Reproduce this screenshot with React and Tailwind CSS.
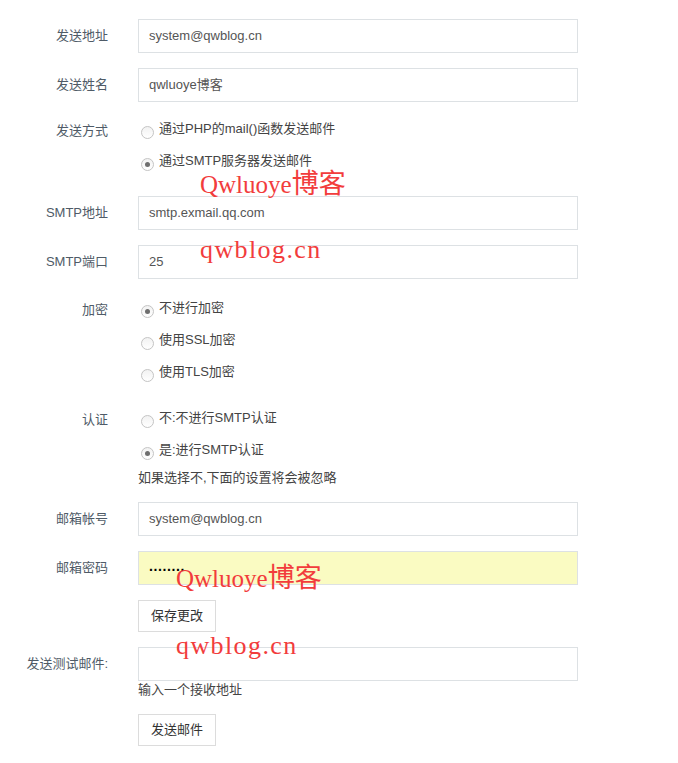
import React from "react";

const font = { fontFamily: '"Liberation Sans", "Noto Sans CJK SC", sans-serif' };

function TextInput({ value, yellow }) {
  return (
    <div
      className={`w-[440px] h-[34px] border border-[#dde1e4] pl-[10px] flex items-center text-[13px] text-[#555] ${
        yellow ? "bg-[#fafbc2]" : "bg-white"
      }`}
    >
      {value}
    </div>
  );
}

function Radio({ checked, children }) {
  return (
    <div className="h-[32px] flex items-center pl-[3px]">
      <span className="w-[13px] h-[13px] rounded-full border border-[#c4c4c4] bg-gradient-to-b from-[#f2f2f2] to-white flex items-center justify-center shrink-0 translate-y-[1px]">
        {checked && <span className="w-[5px] h-[5px] rounded-full bg-[#6e6e6e]" />}
      </span>
      <span className="ml-[5px] text-[13px] text-[#444] -translate-y-[2px]">{children}</span>
    </div>
  );
}

function Row({ label, children }) {
  return (
    <div className="flex mb-[15px]">
      <div className="w-[108px] shrink-0 text-right text-[13px] leading-[34px] text-[#4f5b67]">
        {label}
      </div>
      <div className="ml-[30px]">{children}</div>
    </div>
  );
}

function Button({ children }) {
  return (
    <div className="inline-flex h-[32px] items-center px-[12px] border border-[#dcdcdc] bg-white text-[13px] text-[#333]">
      {children}
    </div>
  );
}

function Watermark({ left, top1, top2 }) {
  const serif = { fontFamily: '"Liberation Serif", "Noto Sans CJK SC", serif' };
  return (
    <>
      <div
        className="absolute leading-none text-[#f23c3c] text-[25px] whitespace-nowrap"
        style={{ ...serif, left, top: top1 }}
      >
        Qwluoye<span className="text-[27px]">博客</span>
      </div>
      <div
        className="absolute leading-none text-[#f23c3c] text-[26px] tracking-[1.4px] whitespace-nowrap"
        style={{ ...serif, left, top: top2 }}
      >
        qwblog.cn
      </div>
    </>
  );
}

export default function App() {
  return (
    <div className="relative w-[678px] h-[763px] bg-white pt-[19px]" style={font}>
      <Row label="发送地址">
        <TextInput value="system@qwblog.cn" />
      </Row>
      <Row label="发送姓名">
        <TextInput value="qwluoye博客" />
      </Row>
      <div className="flex mb-[17px] -mt-[2px]">
        <div className="w-[108px] shrink-0 text-right text-[13px] leading-[32px] text-[#4f5b67]">发送方式</div>
        <div className="ml-[30px]">
          <Radio>通过PHP的mail()函数发送邮件</Radio>
          <Radio checked>通过SMTP服务器发送邮件</Radio>
        </div>
      </div>
      <Row label="SMTP地址">
        <TextInput value="smtp.exmail.qq.com" />
      </Row>
      <Row label="SMTP端口">
        <TextInput value="25" />
      </Row>
      <div className="flex mb-[14px]">
        <div className="w-[108px] shrink-0 text-right text-[13px] leading-[32px] text-[#4f5b67]">加密</div>
        <div className="ml-[30px]">
          <Radio checked>不进行加密</Radio>
          <Radio>使用SSL加密</Radio>
          <Radio>使用TLS加密</Radio>
        </div>
      </div>
      <div className="flex mb-[14px]">
        <div className="w-[108px] shrink-0 text-right text-[13px] leading-[32px] text-[#4f5b67]">认证</div>
        <div className="ml-[30px]">
          <Radio>不:不进行SMTP认证</Radio>
          <Radio checked>是:进行SMTP认证</Radio>
          <div className="text-[13px] leading-[20px] text-[#444]">如果选择不,下面的设置将会被忽略</div>
        </div>
      </div>
      <Row label="邮箱帐号">
        <TextInput value="system@qwblog.cn" />
      </Row>
      <Row label="邮箱密码">
        <TextInput
          yellow
          value={
            <span className="font-bold text-black text-[14px] tracking-[0.6px] -translate-y-[2px] inline-block">
              ........
            </span>
          }
        />
      </Row>
      <Row label="">
        <Button>保存更改</Button>
      </Row>
      <div className="flex mb-[15px]">
        <div className="w-[108px] shrink-0 text-right text-[13px] leading-[34px] text-[#4f5b67]">发送测试邮件:</div>
        <div className="ml-[30px]">
          <TextInput value="" />
          <div className="text-[13px] leading-[18px] text-[#444]">输入一个接收地址</div>
        </div>
      </div>
      <div className="flex">
        <div className="w-[108px] shrink-0" />
        <div className="ml-[30px]">
          <Button>发送邮件</Button>
        </div>
      </div>

      <Watermark left={200} top1={171} top2={237} />
      <Watermark left={176} top1={565} top2={633} />
    </div>
  );
}
